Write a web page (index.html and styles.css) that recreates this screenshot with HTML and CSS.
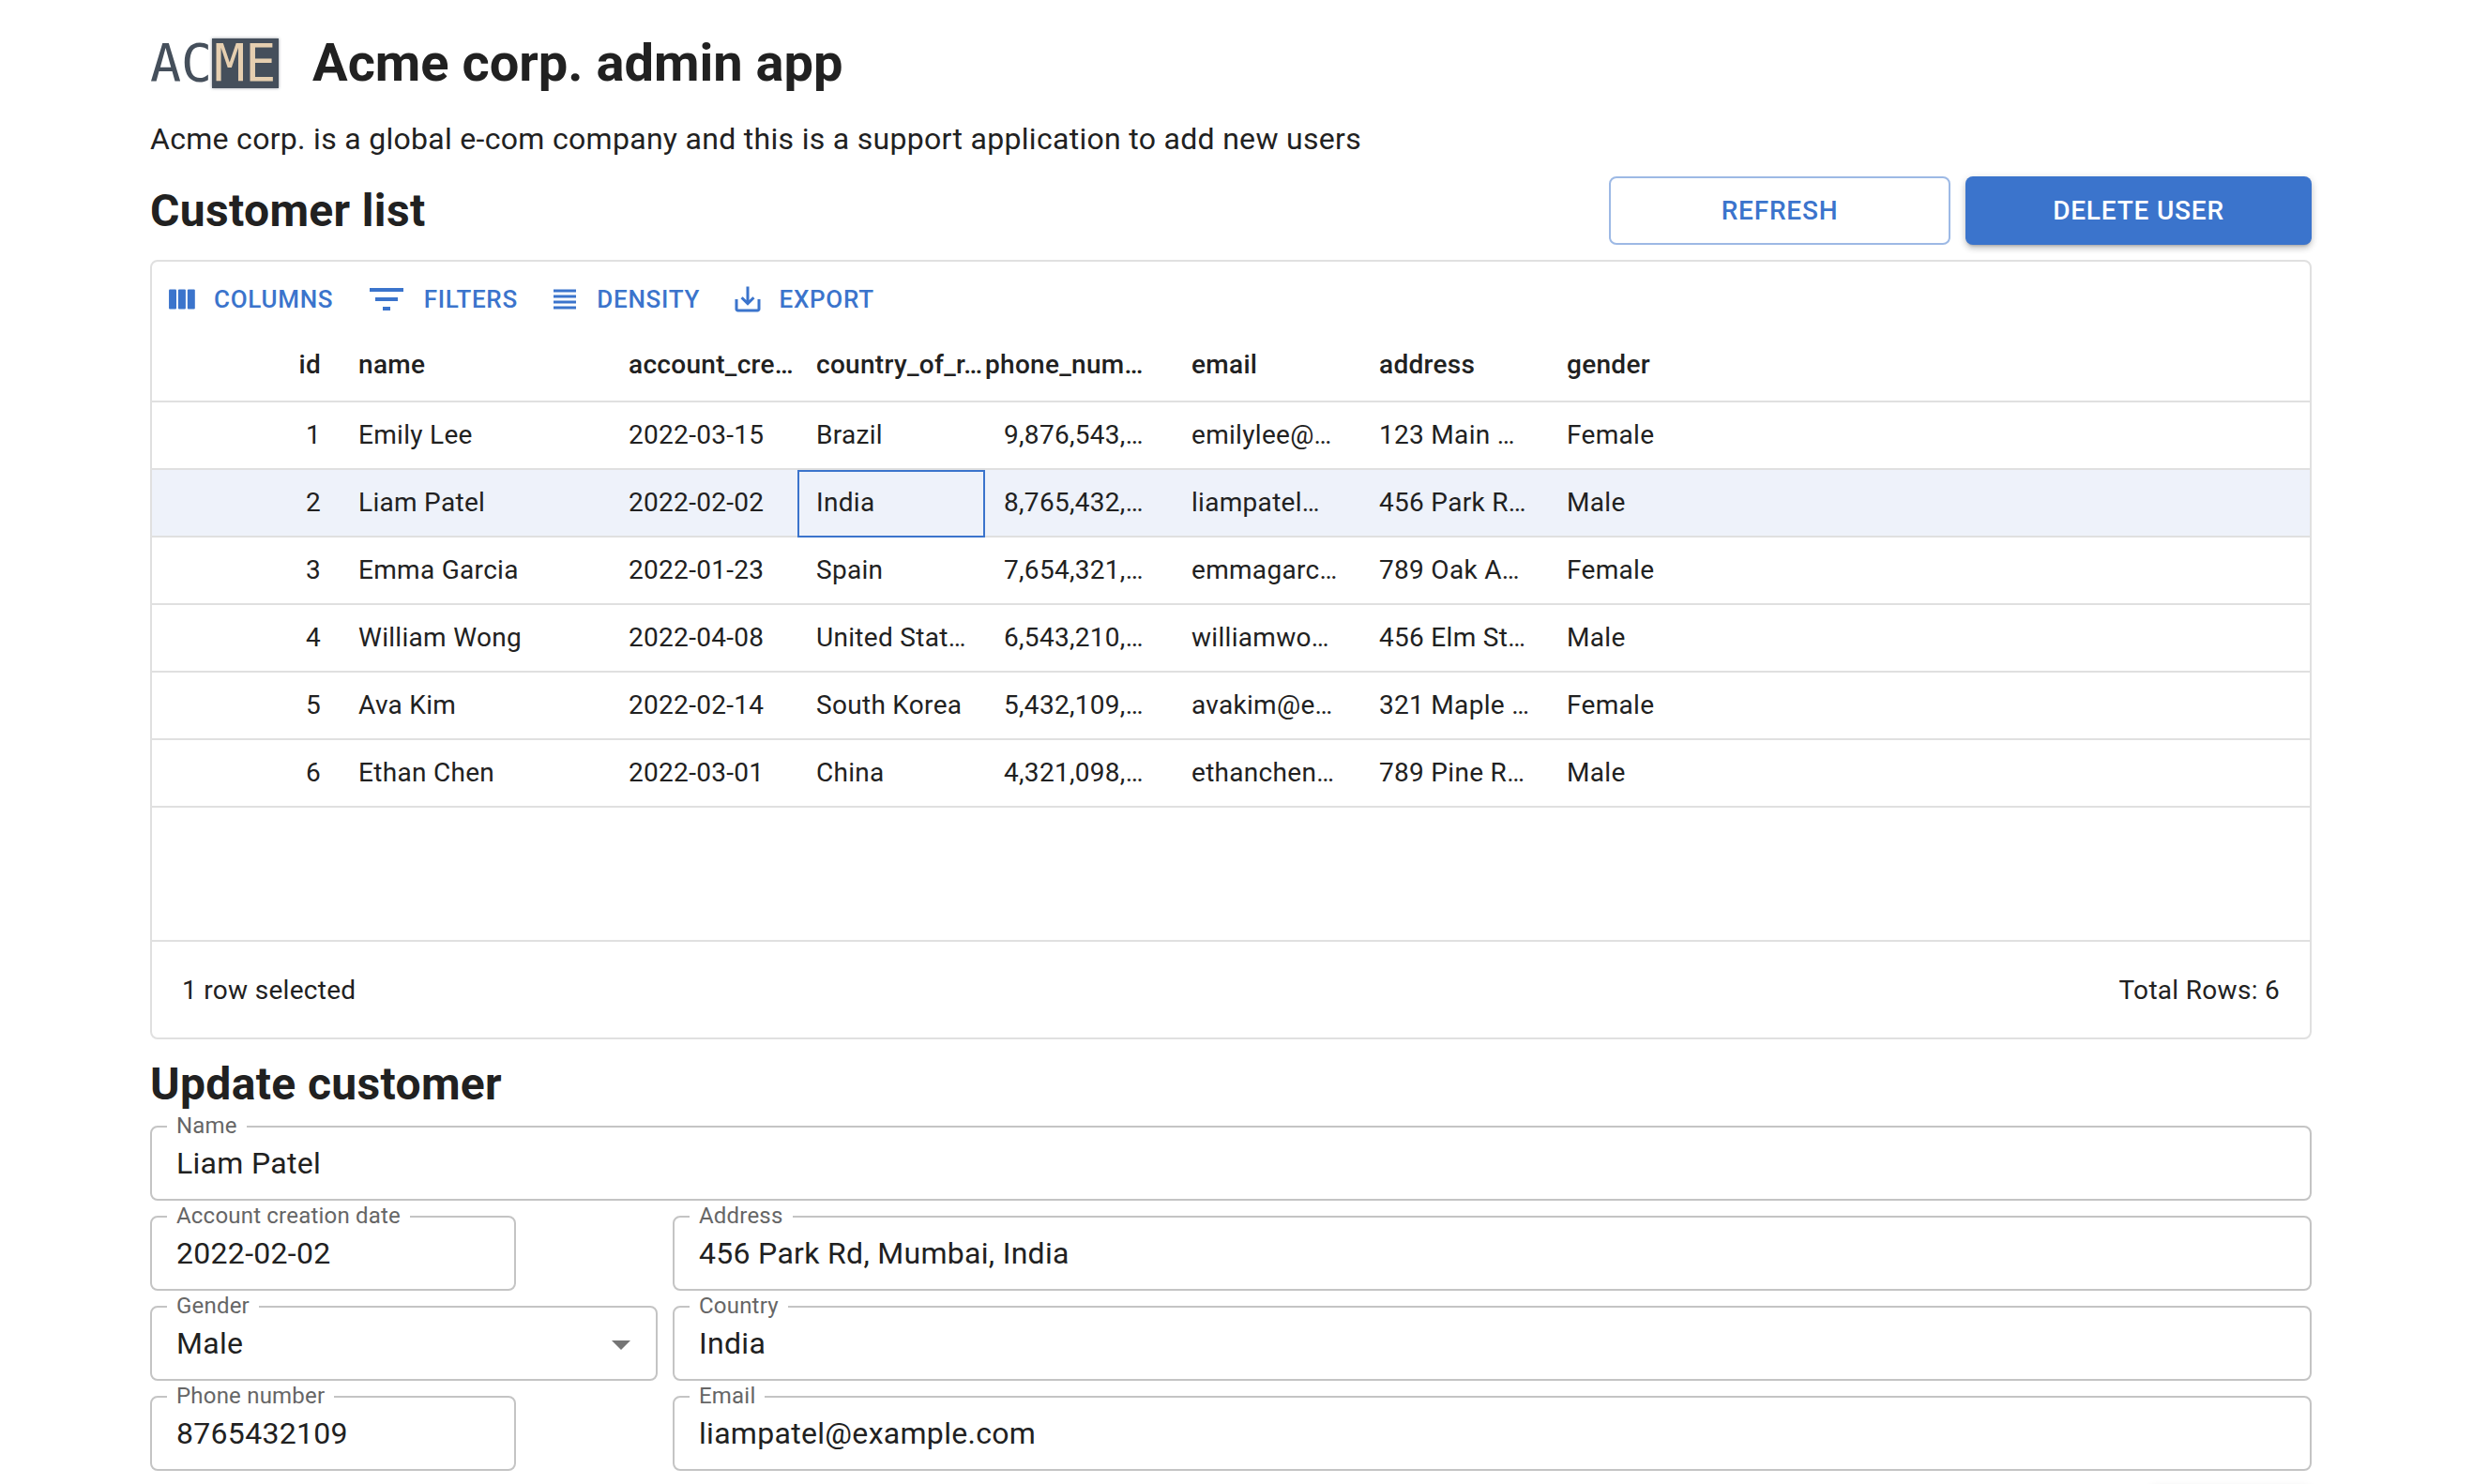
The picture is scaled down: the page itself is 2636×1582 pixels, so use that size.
FILE: index.html
```html
<!DOCTYPE html>
<html lang="en">
<head>
    <meta charset="UTF-8">
    <meta name="viewport" content="width=device-width, initial-scale=1.0">
    <title>Acme corp. admin app</title>
    <link rel="stylesheet" href="styles.css">
</head>
<body>
    <div class="page">
        <div class="brand">
            <div class="logo"><span>AC</span><span class="logo-dark">ME</span></div>
            <h1>Acme corp. admin app</h1>
        </div>
        <p class="intro">Acme corp. is a global e-com company and this is a support application to add new users</p>

        <div class="list-head">
            <h2>Customer list</h2>
            <div class="actions">
                <button class="btn btn-outline">Refresh</button>
                <button class="btn btn-solid">Delete user</button>
            </div>
        </div>

        <div class="grid">
            <div class="toolbar">
                <a href="#" class="tool">
                    <svg class="tool-icon" viewBox="0 0 24 24"><rect x="2.7" y="5" width="5.3" height="14" rx="0.7"/><rect x="9.3" y="5" width="5.3" height="14" rx="0.7"/><rect x="15.9" y="5" width="5.3" height="14" rx="0.7"/></svg>
                    Columns
                </a>
                <a href="#" class="tool">
                    <svg class="tool-icon-wide" viewBox="0 0 24 24"><path d="M10 18h4v-2h-4v2zM3 6v2h18V6H3zm3 7h12v-2H6v2z"/></svg>
                    Filters
                </a>
                <a href="#" class="tool">
                    <svg class="tool-icon-wide density" viewBox="0 0 24 24"><path d="M4 15h16v-2H4v2zm0 4h16v-2H4v2zm0-8h16V9H4v2zM4 7h16V5H4v2z"/></svg>
                    Density
                </a>
                <a href="#" class="tool">
                    <svg class="tool-icon" viewBox="0 0 24 24"><path d="M19 12v7H5v-7H3v7c0 1.1.9 2 2 2h14c1.1 0 2-.9 2-2v-7h-2zm-6 .67l2.59-2.58L17 11.5l-5 5-5-5 1.41-1.41L11 12.67V3h2z"/></svg>
                    Export
                </a>
            </div>

            <div class="row row-head">
                <div class="cell col-id num">id</div>
                <div class="cell col-name">name</div>
                <div class="cell">account_cre…</div>
                <div class="cell">country_of_r…</div>
                <div class="cell num-head">phone_num…</div>
                <div class="cell">email</div>
                <div class="cell">address</div>
                <div class="cell">gender</div>
            </div>

            <div class="row">
                <div class="cell col-id num">1</div>
                <div class="cell col-name">Emily Lee</div>
                <div class="cell">2022-03-15</div>
                <div class="cell">Brazil</div>
                <div class="cell">9,876,543,…</div>
                <div class="cell">emilylee@…</div>
                <div class="cell">123 Main …</div>
                <div class="cell">Female</div>
            </div>
            <div class="row selected">
                <div class="cell col-id num">2</div>
                <div class="cell col-name">Liam Patel</div>
                <div class="cell">2022-02-02</div>
                <div class="cell focused">India</div>
                <div class="cell">8,765,432,…</div>
                <div class="cell">liampatel…</div>
                <div class="cell">456 Park R…</div>
                <div class="cell">Male</div>
            </div>
            <div class="row">
                <div class="cell col-id num">3</div>
                <div class="cell col-name">Emma Garcia</div>
                <div class="cell">2022-01-23</div>
                <div class="cell">Spain</div>
                <div class="cell">7,654,321,…</div>
                <div class="cell">emmagarc…</div>
                <div class="cell">789 Oak A…</div>
                <div class="cell">Female</div>
            </div>
            <div class="row">
                <div class="cell col-id num">4</div>
                <div class="cell col-name">William Wong</div>
                <div class="cell">2022-04-08</div>
                <div class="cell">United Stat…</div>
                <div class="cell">6,543,210,…</div>
                <div class="cell">williamwo…</div>
                <div class="cell">456 Elm St…</div>
                <div class="cell">Male</div>
            </div>
            <div class="row">
                <div class="cell col-id num">5</div>
                <div class="cell col-name">Ava Kim</div>
                <div class="cell">2022-02-14</div>
                <div class="cell">South Korea</div>
                <div class="cell">5,432,109,…</div>
                <div class="cell">avakim@e…</div>
                <div class="cell">321 Maple …</div>
                <div class="cell">Female</div>
            </div>
            <div class="row">
                <div class="cell col-id num">6</div>
                <div class="cell col-name">Ethan Chen</div>
                <div class="cell">2022-03-01</div>
                <div class="cell">China</div>
                <div class="cell">4,321,098,…</div>
                <div class="cell">ethanchen…</div>
                <div class="cell">789 Pine R…</div>
                <div class="cell">Male</div>
            </div>

            <div class="grid-empty"></div>
            <div class="grid-footer">
                <span>1 row selected</span>
                <span>Total Rows: 6</span>
            </div>
        </div>

        <h2 class="update-title">Update customer</h2>
        <div class="form">
            <div class="field">
                <span class="label">Name</span>
                <span class="value">Liam Patel</span>
            </div>
            <div class="form-row">
                <div class="side"><div class="field field-short">
                    <span class="label">Account creation date</span>
                    <span class="value">2022-02-02</span>
                </div></div>
                <div class="field grow">
                    <span class="label">Address</span>
                    <span class="value">456 Park Rd, Mumbai, India</span>
                </div>
            </div>
            <div class="form-row">
                <div class="side"><div class="field">
                    <span class="label">Gender</span>
                    <span class="value">Male</span>
                    <span class="caret"></span>
                </div></div>
                <div class="field grow">
                    <span class="label">Country</span>
                    <span class="value">India</span>
                </div>
            </div>
            <div class="form-row">
                <div class="side"><div class="field field-short">
                    <span class="label">Phone number</span>
                    <span class="value">8765432109</span>
                </div></div>
                <div class="field grow">
                    <span class="label">Email</span>
                    <span class="value">liampatel@example.com</span>
                </div>
            </div>
            <!-- next button starts below the fold, only its shadow shows -->
            <div class="form-end"><div class="form-submit"></div></div>
        </div>
    </div>
</body>
</html>
```
FILE: styles.css
```css
body {
    margin: 0;
    padding: 0;
    background-color: #fff;
    color: #212121;
    font-family: Roboto, Arial, sans-serif;
    height: 1582px;
    overflow: hidden;
}

.page {
    width: 2304px;
    margin-left: 160px;
}

/* header */
.brand {
    display: flex;
    align-items: center;
    height: 134px;
}

.logo {
    display: flex;
    align-items: center;
    width: 173px;
    font-family: "DejaVu Sans Mono", monospace;
    font-size: 55px;
    line-height: 53px;
    color: #454f5b;
    filter: blur(0.6px);
}

.logo-dark {
    background-color: #454f5b;
    color: #e6cfb0;
    padding: 0 3px 0 2px;
    box-shadow: 0 0 3px rgba(69, 79, 91, 0.6);
}

h1 {
    margin: 0;
    padding-top: 2px;
    font-size: 56px;
    font-weight: 700;
    line-height: 1.2;
}

.intro {
    margin: 0;
    font-size: 32px;
    line-height: 28px;
    letter-spacing: 0.3px;
    height: 54px;
}

.list-head {
    display: flex;
    justify-content: space-between;
    align-items: center;
    height: 73px;
}

h2 {
    margin: 0;
    font-size: 48px;
    font-weight: 700;
    letter-spacing: 0.35px;
}

.actions {
    display: flex;
    gap: 16px;
}

.btn {
    height: 73px;
    border-radius: 8px;
    font-family: Roboto, Arial, sans-serif;
    font-size: 28px;
    font-weight: 500;
    letter-spacing: 0.8px;
    text-transform: uppercase;
    cursor: pointer;
}

.btn-outline {
    width: 364px;
    background-color: #fff;
    color: #3b74cc;
    border: 2px solid #9db9e5;
}

.btn-solid {
    width: 369px;
    background-color: #3b74cc;
    color: #fff;
    border: 0;
    box-shadow: 0 3px 3px -2px rgba(0, 0, 0, 0.2), 0 4px 6px 0 rgba(0, 0, 0, 0.14), 0 2px 10px 0 rgba(0, 0, 0, 0.12);
}

/* data grid */
.grid {
    margin-top: 16px;
    border: 2px solid #e0e0e0;
    border-radius: 8px;
    font-size: 28px;
    letter-spacing: 0.3px;
}

.toolbar {
    display: flex;
    align-items: center;
    gap: 16.5px;
    height: 70px;
    padding: 9px 8px 0;
    box-sizing: border-box;
}

.tool {
    display: flex;
    align-items: center;
    gap: 16px;
    padding: 8px 10px 8px 6px;
    font-size: 26px;
    font-weight: 500;
    letter-spacing: 0.7px;
    color: #3b74cc;
    text-decoration: none;
    text-transform: uppercase;
}

.tool svg {
    fill: #3b74cc;
    flex-shrink: 0;
}

.tool-icon {
    width: 36px;
    height: 36px;
}

.tool-icon-wide {
    width: 48px;
    height: 48px;
    margin: -6px 0;
}

.density {
    width: 36px;
    height: 36px;
    margin: 0;
}

.row {
    display: flex;
    height: 72px;
    box-sizing: border-box;
    border-bottom: 2px solid #e0e0e0;
}

.row-head {
    height: 80px;
    font-weight: 500;
}

.cell {
    width: 200px;
    box-sizing: border-box;
    padding: 0 20px;
    line-height: 70px;
    white-space: nowrap;
}

.row-head .cell {
    line-height: 80px;
    padding-right: 0;
}

.col-name {
    width: 288px;
}

.num {
    text-align: right;
}

.row-head .num {
    padding-right: 20px;
}

.row-head .num-head {
    padding-left: 0;
}

.selected {
    background-color: #eef2fa;
}

.focused {
    margin-bottom: -2px;
    outline: 2px solid #3b74cc;
    outline-offset: -2px;
}

.grid-empty {
    height: 141px;
}

.grid-footer {
    display: flex;
    justify-content: space-between;
    align-items: center;
    height: 102px;
    padding: 0 32px;
    border-top: 2px solid #e0e0e0;
}

/* form */
.update-title {
    margin-top: 20px;
    line-height: 56px;
    height: 72px;
}

.form {
    display: flex;
    flex-direction: column;
    gap: 16px;
}

.form-row {
    display: flex;
    gap: 16px;
}

.side {
    width: 541px;
}

.field {
    position: relative;
    height: 80px;
    box-sizing: border-box;
    border: 2px solid #c4c4c4;
    border-radius: 8px;
    padding: 0 26px;
    font-size: 32px;
    letter-spacing: 0.3px;
    line-height: 76px;
}

.field-short {
    width: 390px;
}

.grow {
    flex: 1;
}

.label {
    position: absolute;
    left: 16px;
    top: -14px;
    padding: 0 10px;
    background-color: #fff;
    font-size: 24px;
    line-height: 24px;
    letter-spacing: 0.2px;
    color: #666;
}

.caret {
    position: absolute;
    right: 27px;
    top: 35px;
    width: 0;
    height: 0;
    border-left: 10px solid transparent;
    border-right: 10px solid transparent;
    border-top: 10px solid #757575;
}

.form-end {
    display: flex;
    justify-content: flex-end;
}

.form-submit {
    width: 174px;
    height: 73px;
    border-radius: 8px;
    background-color: #3b74cc;
    box-shadow: 0 2px 10px 0 rgba(0, 0, 0, 0.12);
}
```
